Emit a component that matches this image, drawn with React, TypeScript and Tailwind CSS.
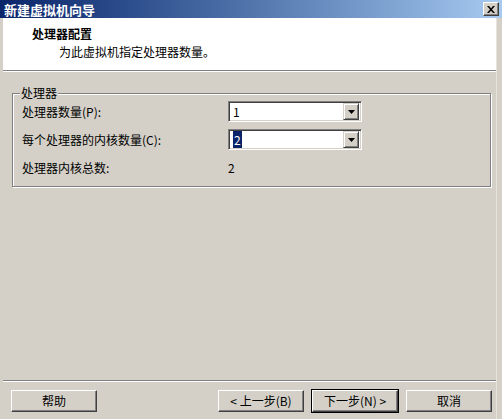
const font = "font-['SimSun','Noto_Sans_CJK_SC',sans-serif]"

function Combo({ value, selected }: { value: string; selected?: boolean }) {
  return (
    <div className="flex items-center w-[134px] h-[21px] bg-white border border-t-[#808080] border-l-[#808080] border-b-white border-r-white shadow-[inset_1px_1px_0_#404040,inset_-1px_-1px_0_#d4d0c8] pl-[4px] pr-[2px]">
      <div className="flex-1 text-[12px] leading-[14px] text-black">
        {selected ? <span className="bg-[#0a246a] text-white px-[1px]">{value}</span> : value}
      </div>
      <div className="w-[16px] h-[17px] flex items-center justify-center bg-[#d4d0c8] border border-t-[#d4d0c8] border-l-[#d4d0c8] border-b-[#404040] border-r-[#404040] shadow-[inset_1px_1px_0_#fff,inset_-1px_-1px_0_#808080]">
        <svg width="7" height="4" viewBox="0 0 7 4">
          <path d="M0 0h7L3.5 4z" fill="#000" />
        </svg>
      </div>
    </div>
  )
}

function Button({ label, primary }: { label: string; primary?: boolean }) {
  return (
    <div className={primary ? "border border-black" : "border border-transparent"}>
      <div className="w-[86px] h-[22px] flex items-center justify-center text-[12px] text-black bg-[#d4d0c8] border border-t-white border-l-white border-b-[#404040] border-r-[#404040] shadow-[inset_-1px_-1px_0_#808080]">
        {label}
      </div>
    </div>
  )
}

export default function App() {
  return (
    <div className={`w-[502px] h-[419px] bg-[#d4d0c8] flex flex-col overflow-hidden ${font}`}>
      {/* Title bar */}
      <div className="h-[18px] flex items-center justify-between pl-[4px] pr-[3px] bg-gradient-to-r from-[#0a246a] to-[#a6caf0]">
        <span className="text-white font-bold text-[13px] leading-[15px]">新建虚拟机向导</span>
        <div className="w-[16px] h-[14px] flex items-center justify-center bg-[#d4d0c8] border border-t-white border-l-white border-b-[#404040] border-r-[#404040] shadow-[inset_-1px_-1px_0_#808080]">
          <svg width="8" height="7" viewBox="0 0 8 7">
            <path d="M0 0h2l2 2.3L6 0h2L5 3.5 8 7H6L4 4.7 2 7H0l3-3.5z" fill="#000" />
          </svg>
        </div>
      </div>

      <div className="flex-1 flex flex-col ml-[3px] mr-[5px] border-r border-[#e6e3dd]">
        {/* Header */}
        <div className="h-[52px] bg-white pt-[9px] pl-[29px]">
          <div className="text-[12px] leading-[14px] font-bold text-black">处理器配置</div>
          <div className="text-[12px] leading-[14px] text-black mt-[4px] pl-[27px]">为此虚拟机指定处理器数量。</div>
        </div>
        <div className="h-[2px] border-t border-[#808080] border-b border-b-white" />

        {/* Body */}
        <div className="flex-1 pt-[14px] pl-[9px] pr-[5px]">
          <fieldset className="border border-[#808080] shadow-[1px_1px_0_#fff,inset_1px_1px_0_#fff] pl-[9px] pb-[8px] pt-[1px]">
            <legend className="ml-[-2px] px-[1px] text-[12px] leading-[14px] text-black bg-[#d4d0c8]">处理器</legend>
            <div className="flex flex-col gap-[7px] text-[12px] text-black">
              <div className="flex items-center h-[21px]">
                <span className="w-[206px]">处理器数量(P):</span>
                <Combo value="1" />
              </div>
              <div className="flex items-center h-[21px]">
                <span className="w-[206px]">每个处理器的内核数量(C):</span>
                <Combo value="2" selected />
              </div>
              <div className="flex items-center h-[21px]">
                <span className="w-[206px]">处理器内核总数:</span>
                <span>2</span>
              </div>
            </div>
          </fieldset>
        </div>

        {/* Footer */}
        <div className="h-[2px] border-t border-[#808080] border-b border-b-white" />
        <div className="flex items-center pt-[7px] pb-[6px] pl-[7px] pr-[3px]">
          <Button label="帮助" />
          <div className="flex-1" />
          <div className="flex gap-[6px]">
            <Button label="< 上一步(B)" />
            <Button label="下一步(N) >" primary />
            <Button label="取消" />
          </div>
        </div>
      </div>
    </div>
  )
}
